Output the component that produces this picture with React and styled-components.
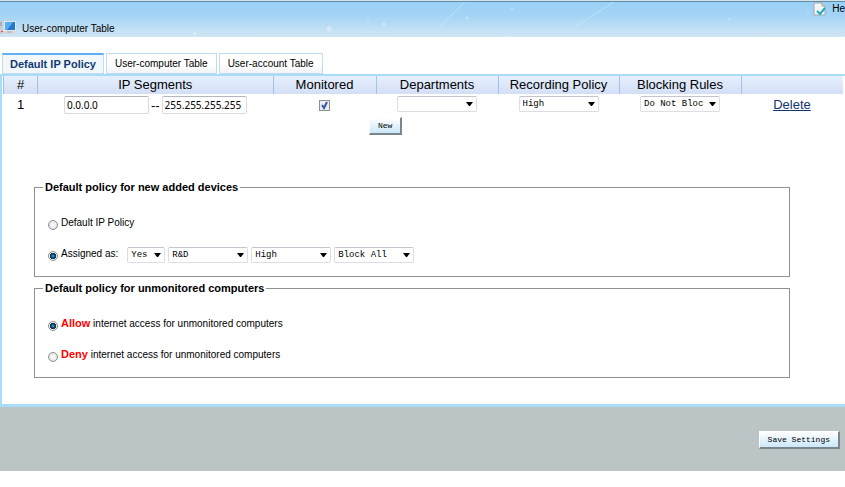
import { useState } from 'react';
import styled, { createGlobalStyle } from 'styled-components';

const GlobalStyle = createGlobalStyle`
  * {
    box-sizing: border-box;
  }

  body {
    margin: 0;
    background-color: #fff;
    color: #000;
    font-family: "Liberation Sans", Arial, sans-serif;
    font-size: 10px;
    overflow-x: hidden;
  }
`;

const Header = styled.header`
  position: relative;
  height: 37px;
  display: flex;
  justify-content: space-between;
  border-top: 1px solid #d5e3ea;
  box-shadow: inset 0 1px 0 #5f8ba3;
  background: linear-gradient(#98d0f7, #a3d4f5 40%, #d2e6f4);
`;

const Stars = styled.svg`
  position: absolute;
  inset: 0;
  pointer-events: none;
`;

const PageTitle = styled.h1`
  display: flex;
  align-items: center;
  gap: 6px;
  margin: 17px 0 0;
  height: 20px;
  font-size: 10px;
  font-weight: normal;
`;

const HelpLink = styled.a`
  display: flex;
  align-items: center;
  gap: 6px;
  height: 15px;
  color: #000;
  text-decoration: none;
`;

const Tabs = styled.nav`
  display: flex;
  gap: 2px;
  padding: 16px 2px 0;
`;

const Tab = styled.button`
  height: 21px;
  padding: 0 ${(props) => (props.$active ? '7px' : '8px')};
  border: 1px solid #c0dcf3;
  border-top: ${(props) => (props.$active ? '2px solid #5fb0f4' : '1px solid #c0dcf3')};
  background: ${(props) =>
    props.$active ? '#f2f8fa' : 'linear-gradient(#fff 50%, #f3f4f6)'};
  color: ${(props) => (props.$active ? '#123a75' : '#000')};
  font-family: inherit;
  font-size: ${(props) => (props.$active ? '11px' : '10px')};
  font-weight: ${(props) => (props.$active ? 'bold' : 'normal')};
`;

const Panel = styled.main`
  border: solid #aadcf8;
  border-width: 2px 0 3px 2px;
  padding: 0 2px 26px 1px;
`;

const PolicyTable = styled.table`
  width: 100%;
  table-layout: fixed;
  border-collapse: collapse;
  font-size: 13px;
`;

const Col = styled.col`
  width: ${(props) => props.$width};
`;

const Th = styled.th`
  height: 18px;
  padding: 0;
  border-left: 1px solid #9fc3ee;
  background: linear-gradient(#e6effc, #d3dff6);
  font-weight: normal;
  line-height: 18px;
`;

const Td = styled.td`
  height: 20px;
  padding: 0;
  text-align: center;
`;

const Segments = styled.div`
  display: flex;
  align-items: center;
  justify-content: center;
  gap: 2px;
  padding-top: 2px;
`;

const IpInput = styled.input`
  width: 85px;
  height: 18px;
  padding: 0 2px;
  border: 1px solid #d9dadf;
  border-top-color: #b5b6bd;
  border-radius: 2px;
  font-family: "Noto Sans", sans-serif;
  font-size: 10px;
`;

const Check = styled.input`
  appearance: none;
  width: 11px;
  height: 11px;
  margin: 0;
  border: 1px solid #8e8f8f;
  vertical-align: middle;
  background: #e9edf2;

  &:checked {
    background: #e9edf2
      url("data:image/svg+xml,%3Csvg xmlns='http://www.w3.org/2000/svg' viewBox='0 0 9 9'%3E%3Cpath d='M2 4l2 3 3-6' fill='none' stroke='%233a55a4' stroke-width='2'/%3E%3C/svg%3E");
  }
`;

const Select = styled.select`
  appearance: none;
  display: block;
  width: ${(props) => (props.$small ? '38px' : '80px')};
  height: 16px;
  margin: 0 auto;
  padding: 0 14px 0 3px;
  border: 1px solid #dcdde5;
  border-top-color: #c4c5cf;
  border-radius: 2px;
  background: #fff
    url("data:image/svg+xml,%3Csvg xmlns='http://www.w3.org/2000/svg' width='7' height='4'%3E%3Cpath d='M0 0h7L4 4H3z'/%3E%3C/svg%3E")
    no-repeat right 3px center;
  color: #000;
  font-family: "Liberation Mono", monospace;
  font-size: 9px;
`;

const DeleteLink = styled.a`
  color: #12336b;
`;

const NewRow = styled.div`
  padding: 3px 0 0 366px;
`;

const Button = styled.button`
  display: block;
  height: 18px;
  padding: 0 8px;
  border: solid;
  border-width: 1px 2px 2px 1px;
  border-color: #fff #7d858c #7d858c #fff;
  background: linear-gradient(#fff, #eaf5fd 40%, #cbe8fb);
  color: #000;
  font-family: "Liberation Mono", monospace;
  font-size: 8px;
`;

const Policies = styled.form`
  display: flex;
  flex-direction: column;
  gap: 5px;
  margin: 46px 53px 0 31px;
`;

const Group = styled.fieldset`
  margin: 0;
  height: 96px;
  padding: 20px 13px 0;
  border: 1px solid #8f9093;
`;

const Legend = styled.legend`
  margin-left: -5px;
  padding: 0 2px;
  font-size: 11px;
  font-weight: bold;
  line-height: 13px;
`;

const Choice = styled.div`
  display: flex;
  align-items: center;
  gap: 3px;
  height: 16px;
  margin-bottom: 15px;
`;

const Radio = styled.input`
  appearance: none;
  width: 10px;
  height: 10px;
  margin: 5px 0 0;
  border: 1px solid #8e8f90;
  border-radius: 50%;
  background: radial-gradient(#fff, #d6d8da);

  &:checked {
    background: radial-gradient(circle, #4fb5e0 0, #12385c 2px, #12385c 3px, #eef1f3 3px);
  }
`;

const ChoiceLabel = styled.label`
  font-size: 10px;
`;

const Selects = styled.div`
  display: flex;
  gap: 3px;
  margin: 3px 0 0 6px;
`;

const Verb = styled.strong`
  color: #f00;
  font-size: 11px;
`;

const Footer = styled.footer`
  display: flex;
  justify-content: flex-end;
  height: 64px;
  padding: 24px 5px 0;
  background-color: #bcc5c6;
`;

const tabs = ['Default IP Policy', 'User-computer Table', 'User-account Table'];

const columns = [
  { title: '#', width: '34px' },
  { title: 'IP Segments', width: 'auto' },
  { title: 'Monitored', width: '103px' },
  { title: 'Departments', width: '122px' },
  { title: 'Recording Policy', width: '121px' },
  { title: 'Blocking Rules', width: '122px' },
  { title: '', width: '102px' },
];

const Dropdown = ({ label, options, small }) => (
  <Select aria-label={label} $small={small}>
    {options.map((option) => (
      <option key={option}>{option}</option>
    ))}
  </Select>
);

const ComputerIcon = () => (
  <svg width="16" height="14" viewBox="0 0 16 14">
    <path d="M0 0h3v13H0z" fill="#c9cdd2" />
    <path d="M0 2h2M0 4h2" stroke="#8c929a" />
    <path d="M1 10h2v1H1z" fill="#e0503c" />
    <path d="M4 0h12v10H4z" fill="#e4e8ec" />
    <path d="M5 1h10v8H5z" fill="#2478d0" />
    <path d="M5 1h8L7 9H5z" fill="#56aef0" />
    <path d="M8 10h4v2H8z" fill="#a9adb5" />
    <path d="M4 10h11v3H4z" fill="#d9d3da" />
    <path d="M7 11h5" stroke="#a9adb5" />
  </svg>
);

const HelpIcon = () => (
  <svg width="13" height="14" viewBox="0 0 13 14">
    <path d="M1 1h8l3 3v9H1z" fill="#f3f5f6" stroke="#a3a8ac" />
    <path d="M9 1v3h3" fill="#d5d8da" stroke="#a3a8ac" />
    <path d="M4 9l3 3 5-6" fill="none" stroke="#27a9c4" strokeWidth="2" />
  </svg>
);

const App = () => {
  const [active, setActive] = useState(tabs[0]);

  return (
    <>
      <GlobalStyle />
      <Header>
        <Stars width="845" height="36">
          <path d="M440 25L465 1M576 25L614 1" stroke="#fff" opacity="0.3" />
          <g fill="#fff" opacity="0.35">
            <circle cx="195" cy="32" r="1.5" />
            <circle cx="329" cy="28" r="2.5" />
            <circle cx="384" cy="23" r="1.5" />
            <circle cx="368" cy="20" r="1" />
            <circle cx="370" cy="31" r="1" />
            <circle cx="467" cy="17" r="1.5" />
            <circle cx="512" cy="8" r="1" />
            <circle cx="729" cy="18" r="1" />
            <circle cx="808" cy="12" r="1" />
          </g>
        </Stars>
        <PageTitle>
          <ComputerIcon />
          User-computer Table
        </PageTitle>
        <HelpLink href="#help">
          <HelpIcon />
          He
        </HelpLink>
      </Header>

      <Tabs>
        {tabs.map((tab) => (
          <Tab
            key={tab}
            type="button"
            $active={tab === active}
            onClick={() => setActive(tab)}
          >
            {tab}
          </Tab>
        ))}
      </Tabs>

      <Panel>
        <PolicyTable>
          <colgroup>
            {columns.map((c) => (
              <Col key={c.title} $width={c.width} />
            ))}
          </colgroup>
          <thead>
            <tr>
              {columns.map((c) => (
                <Th key={c.title}>{c.title}</Th>
              ))}
            </tr>
          </thead>
          <tbody>
            <tr>
              <Td>1</Td>
              <Td>
                <Segments>
                  <IpInput aria-label="First address" defaultValue="0.0.0.0" />
                  --
                  <IpInput
                    aria-label="Last address"
                    defaultValue="255.255.255.255"
                  />
                </Segments>
              </Td>
              <Td>
                <Check type="checkbox" aria-label="Monitored" defaultChecked />
              </Td>
              <Td>
                <Dropdown label="Department" options={['']} />
              </Td>
              <Td>
                <Dropdown label="Recording policy" options={['High']} />
              </Td>
              <Td>
                <Dropdown label="Blocking rule" options={['Do Not Bloc']} />
              </Td>
              <Td>
                <DeleteLink href="#delete">Delete</DeleteLink>
              </Td>
            </tr>
          </tbody>
        </PolicyTable>
        <NewRow>
          <Button type="button">New</Button>
        </NewRow>

        <Policies>
          <Group>
            <Legend>Default policy for new added devices</Legend>
            <Choice>
              <Radio type="radio" name="added" id="added-default" />
              <ChoiceLabel htmlFor="added-default">Default IP Policy</ChoiceLabel>
            </Choice>
            <Choice>
              <Radio type="radio" name="added" id="added-assigned" defaultChecked />
              <ChoiceLabel htmlFor="added-assigned">Assigned as:</ChoiceLabel>
              <Selects>
                <Dropdown label="Monitored" options={['Yes']} small />
                <Dropdown label="Department" options={['R&D']} />
                <Dropdown label="Recording policy" options={['High']} />
                <Dropdown label="Blocking rule" options={['Block All']} />
              </Selects>
            </Choice>
          </Group>
          <Group>
            <Legend>Default policy for unmonitored computers</Legend>
            <Choice>
              <Radio type="radio" name="access" id="access-allow" defaultChecked />
              <ChoiceLabel htmlFor="access-allow">
                <Verb>Allow</Verb> internet access for unmonitored computers
              </ChoiceLabel>
            </Choice>
            <Choice>
              <Radio type="radio" name="access" id="access-deny" />
              <ChoiceLabel htmlFor="access-deny">
                <Verb>Deny</Verb> internet access for unmonitored computers
              </ChoiceLabel>
            </Choice>
          </Group>
        </Policies>
      </Panel>

      <Footer>
        <Button type="button">Save Settings</Button>
      </Footer>
    </>
  );
};

export default App;
